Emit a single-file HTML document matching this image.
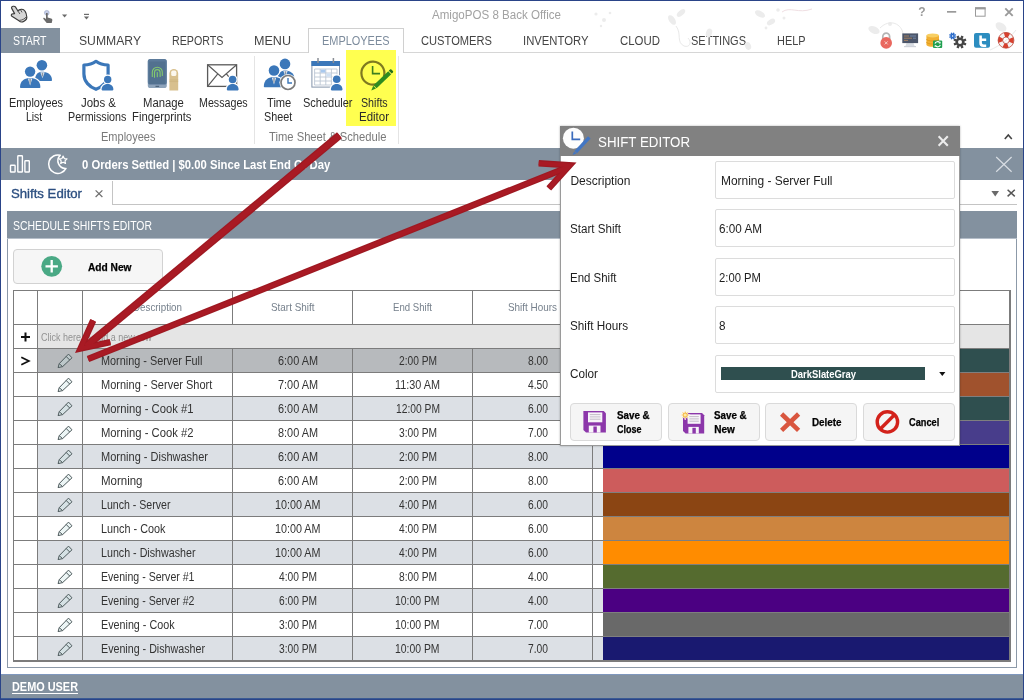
<!DOCTYPE html>
<html><head><meta charset="utf-8"><title>AmigoPOS 8 Back Office</title>
<style>
html,body{margin:0;padding:0;}
body{width:1024px;height:700px;position:relative;overflow:hidden;background:#fff;font-family:"Liberation Sans",sans-serif;}
.t{position:absolute;white-space:nowrap;line-height:1.2;transform-origin:0 50%;}
.r{position:absolute;box-sizing:border-box;}
svg{position:absolute;left:0;top:0;overflow:visible;}
</style></head><body><div id="app" style="position:absolute;left:0;top:0;width:1024px;height:700px;will-change:transform;">
<div class="r" style="left:0px;top:0px;width:1024px;height:700px;background:#fff;border-left:1px solid #2a4488;border-right:1px solid #2a4488;border-top:1px solid #2a4488;border-bottom:1px solid #2a4488;"></div>
<div class="t" style="left:431.50px;top:8.00px;font-size:12.5px;color:#a2a2a2;transform:scaleX(0.9253);">AmigoPOS 8 Back Office</div>
<div class="t" style="left:918.20px;top:5.00px;font-size:12px;color:#9a9a9a;font-weight:bold;">?</div>
<div class="r" style="left:1px;top:28px;width:59px;height:25px;background:#83919f;"></div>
<div class="r" style="left:60px;top:52px;width:962px;height:1px;background:#d6d6d6;"></div>
<div class="r" style="left:308px;top:28px;width:96px;height:25px;background:#fff;border:1px solid #d0d0d0;border-bottom:none;"></div>
<div class="t" style="left:13.00px;top:34.00px;font-size:12.5px;color:#fff;transform:scaleX(0.8413);">START</div>
<div class="t" style="left:79.00px;top:34.00px;font-size:12.5px;color:#444;transform:scaleX(0.9739);">SUMMARY</div>
<div class="t" style="left:172.00px;top:34.00px;font-size:12.5px;color:#444;transform:scaleX(0.8555);">REPORTS</div>
<div class="t" style="left:254.00px;top:34.00px;font-size:12.5px;color:#444;transform:scaleX(1.0053);">MENU</div>
<div class="t" style="left:322.00px;top:34.00px;font-size:12.5px;color:#7c8b9c;transform:scaleX(0.8753);">EMPLOYEES</div>
<div class="t" style="left:420.50px;top:34.00px;font-size:12.5px;color:#444;transform:scaleX(0.8915);">CUSTOMERS</div>
<div class="t" style="left:523.00px;top:34.00px;font-size:12.5px;color:#444;transform:scaleX(0.9038);">INVENTORY</div>
<div class="t" style="left:619.50px;top:34.00px;font-size:12.5px;color:#444;transform:scaleX(0.9142);">CLOUD</div>
<div class="t" style="left:690.50px;top:34.00px;font-size:12.5px;color:#444;transform:scaleX(0.8799);">SETTINGS</div>
<div class="t" style="left:777.00px;top:34.00px;font-size:12.5px;color:#444;transform:scaleX(0.8728);">HELP</div>
<div class="r" style="left:346px;top:50px;width:50px;height:76px;background:#ffff50;"></div>
<div class="r" style="left:254px;top:56px;width:1px;height:88px;background:#e4e4e4;"></div>
<div class="r" style="left:398px;top:56px;width:1px;height:88px;background:#e4e4e4;"></div>
<div class="t" style="left:9.00px;top:96.00px;font-size:12px;color:#2b2b2b;transform:scaleX(0.9097);">Employees</div>
<div class="t" style="left:26.30px;top:110.00px;font-size:12px;color:#2b2b2b;transform:scaleX(0.8675);">List</div>
<div class="t" style="left:80.50px;top:96.00px;font-size:12px;color:#2b2b2b;transform:scaleX(0.9540);">Jobs &amp;</div>
<div class="t" style="left:67.50px;top:110.00px;font-size:12px;color:#2b2b2b;transform:scaleX(0.8921);">Permissions</div>
<div class="t" style="left:143.00px;top:96.00px;font-size:12px;color:#2b2b2b;transform:scaleX(0.9409);">Manage</div>
<div class="t" style="left:132.00px;top:110.00px;font-size:12px;color:#2b2b2b;transform:scaleX(0.9391);">Fingerprints</div>
<div class="t" style="left:198.80px;top:96.00px;font-size:12px;color:#2b2b2b;transform:scaleX(0.8905);">Messages</div>
<div class="t" style="left:267.00px;top:96.00px;font-size:12px;color:#2b2b2b;transform:scaleX(0.9268);">Time</div>
<div class="t" style="left:263.80px;top:110.00px;font-size:12px;color:#2b2b2b;transform:scaleX(0.8993);">Sheet</div>
<div class="t" style="left:302.50px;top:96.00px;font-size:12px;color:#2b2b2b;transform:scaleX(0.9161);">Scheduler</div>
<div class="t" style="left:361.30px;top:96.00px;font-size:12px;color:#2b2b2b;transform:scaleX(0.8896);">Shifts</div>
<div class="t" style="left:358.80px;top:110.00px;font-size:12px;color:#2b2b2b;transform:scaleX(0.9570);">Editor</div>
<div class="t" style="left:101.00px;top:130.00px;font-size:12px;color:#7a7a7a;transform:scaleX(0.9181);">Employees</div>
<div class="t" style="left:268.80px;top:130.00px;font-size:12px;color:#7a7a7a;transform:scaleX(0.9353);">Time Sheet &amp; Schedule</div>
<div class="r" style="left:1px;top:148px;width:1022px;height:32px;background:#83919f;"></div>
<div class="t" style="left:82.40px;top:158.00px;font-size:12.5px;color:#fff;transform:scaleX(0.9025);font-weight:bold;">0 Orders Settled | $0.00 Since Last End Of Day</div>
<div class="r" style="left:112px;top:204px;width:905px;height:1px;background:#c4c4c4;"></div>
<div class="r" style="left:112px;top:181px;width:1px;height:24px;background:#c4c4c4;"></div>
<div class="t" style="left:11.30px;top:186.00px;font-size:13px;color:#2c4f80;transform:scaleX(1.0131);-webkit-text-stroke:.35px #2c4f80;">Shifts Editor</div>
<div class="r" style="left:7px;top:212px;width:1010px;height:456px;background:#fff;border:1px solid #8c99a8;border-top:none;"></div>
<div class="r" style="left:7px;top:211px;width:1010px;height:27px;background:#83919f;"></div>
<div class="r" style="left:7px;top:238px;width:1010px;height:1px;background:#b5bec9;"></div>
<div class="t" style="left:13.00px;top:219.00px;font-size:12.5px;color:#fff;transform:scaleX(0.8350);">SCHEDULE SHIFTS EDITOR</div>
<div class="r" style="left:13px;top:249px;width:150px;height:35px;background:#f6f6f6;border:1px solid #d2d2d2;border-radius:4px;"></div>
<div class="t" style="left:88.20px;top:262.00px;font-size:10px;color:#000;transform:scaleX(1.0169);font-weight:bold;-webkit-text-stroke:.25px #000;">Add New</div>
<div class="r" style="left:13px;top:290px;width:998px;height:372px;background:#fff;border:1px solid #7c7c7c;border-bottom-width:2px;border-right-width:2px;"></div>
<div class="r" style="left:38px;top:325px;width:971px;height:23px;background:#e5e5e5;"></div>
<div class="r" style="left:38px;top:348px;width:555px;height:24px;background:#b7babd;"></div>
<div class="r" style="left:593px;top:348px;width:10px;height:24px;background:#b7babd;"></div>
<div class="r" style="left:603px;top:348px;width:406px;height:24px;background:#2F4F4F;"></div>
<div class="r" style="left:38px;top:372px;width:555px;height:24px;background:#fff;"></div>
<div class="r" style="left:603px;top:372px;width:406px;height:24px;background:#A0522D;"></div>
<div class="r" style="left:38px;top:396px;width:555px;height:24px;background:#dce0e5;"></div>
<div class="r" style="left:593px;top:396px;width:10px;height:24px;background:#dce0e5;"></div>
<div class="r" style="left:603px;top:396px;width:406px;height:24px;background:#2F4F4F;"></div>
<div class="r" style="left:38px;top:420px;width:555px;height:24px;background:#fff;"></div>
<div class="r" style="left:603px;top:420px;width:406px;height:24px;background:#483D8B;"></div>
<div class="r" style="left:38px;top:444px;width:555px;height:24px;background:#dce0e5;"></div>
<div class="r" style="left:593px;top:444px;width:10px;height:24px;background:#dce0e5;"></div>
<div class="r" style="left:603px;top:444px;width:406px;height:24px;background:#00008B;"></div>
<div class="r" style="left:38px;top:468px;width:555px;height:24px;background:#fff;"></div>
<div class="r" style="left:603px;top:468px;width:406px;height:24px;background:#CD5C5C;"></div>
<div class="r" style="left:38px;top:492px;width:555px;height:24px;background:#dce0e5;"></div>
<div class="r" style="left:593px;top:492px;width:10px;height:24px;background:#dce0e5;"></div>
<div class="r" style="left:603px;top:492px;width:406px;height:24px;background:#8B4513;"></div>
<div class="r" style="left:38px;top:516px;width:555px;height:24px;background:#fff;"></div>
<div class="r" style="left:603px;top:516px;width:406px;height:24px;background:#CD853F;"></div>
<div class="r" style="left:38px;top:540px;width:555px;height:24px;background:#dce0e5;"></div>
<div class="r" style="left:593px;top:540px;width:10px;height:24px;background:#dce0e5;"></div>
<div class="r" style="left:603px;top:540px;width:406px;height:24px;background:#FF8C00;"></div>
<div class="r" style="left:38px;top:564px;width:555px;height:24px;background:#fff;"></div>
<div class="r" style="left:603px;top:564px;width:406px;height:24px;background:#556B2F;"></div>
<div class="r" style="left:38px;top:588px;width:555px;height:24px;background:#dce0e5;"></div>
<div class="r" style="left:593px;top:588px;width:10px;height:24px;background:#dce0e5;"></div>
<div class="r" style="left:603px;top:588px;width:406px;height:24px;background:#4B0082;"></div>
<div class="r" style="left:38px;top:612px;width:555px;height:24px;background:#fff;"></div>
<div class="r" style="left:603px;top:612px;width:406px;height:24px;background:#696969;"></div>
<div class="r" style="left:38px;top:636px;width:555px;height:24px;background:#dce0e5;"></div>
<div class="r" style="left:593px;top:636px;width:10px;height:24px;background:#dce0e5;"></div>
<div class="r" style="left:603px;top:636px;width:406px;height:24px;background:#191970;"></div>
<div class="r" style="left:37px;top:290px;width:1px;height:371px;background:#7c7c7c;"></div>
<div class="r" style="left:82px;top:290px;width:1px;height:371px;background:#7c7c7c;"></div>
<div class="r" style="left:232px;top:290px;width:1px;height:35px;background:#7c7c7c;"></div>
<div class="r" style="left:232px;top:348px;width:1px;height:313px;background:#7c7c7c;"></div>
<div class="r" style="left:352px;top:290px;width:1px;height:35px;background:#7c7c7c;"></div>
<div class="r" style="left:352px;top:348px;width:1px;height:313px;background:#7c7c7c;"></div>
<div class="r" style="left:472px;top:290px;width:1px;height:35px;background:#7c7c7c;"></div>
<div class="r" style="left:472px;top:348px;width:1px;height:313px;background:#7c7c7c;"></div>
<div class="r" style="left:592px;top:290px;width:1px;height:35px;background:#7c7c7c;"></div>
<div class="r" style="left:592px;top:348px;width:1px;height:313px;background:#7c7c7c;"></div>
<div class="r" style="left:13px;top:324px;width:996px;height:1px;background:#7c7c7c;"></div>
<div class="r" style="left:13px;top:348px;width:996px;height:1px;background:#7c7c7c;"></div>
<div class="r" style="left:13px;top:372px;width:996px;height:1px;background:#7c7c7c;"></div>
<div class="r" style="left:13px;top:396px;width:996px;height:1px;background:#7c7c7c;"></div>
<div class="r" style="left:13px;top:420px;width:996px;height:1px;background:#7c7c7c;"></div>
<div class="r" style="left:13px;top:444px;width:996px;height:1px;background:#7c7c7c;"></div>
<div class="r" style="left:13px;top:468px;width:996px;height:1px;background:#7c7c7c;"></div>
<div class="r" style="left:13px;top:492px;width:996px;height:1px;background:#7c7c7c;"></div>
<div class="r" style="left:13px;top:516px;width:996px;height:1px;background:#7c7c7c;"></div>
<div class="r" style="left:13px;top:540px;width:996px;height:1px;background:#7c7c7c;"></div>
<div class="r" style="left:13px;top:564px;width:996px;height:1px;background:#7c7c7c;"></div>
<div class="r" style="left:13px;top:588px;width:996px;height:1px;background:#7c7c7c;"></div>
<div class="r" style="left:13px;top:612px;width:996px;height:1px;background:#7c7c7c;"></div>
<div class="r" style="left:13px;top:636px;width:996px;height:1px;background:#7c7c7c;"></div>
<div class="r" style="left:603px;top:348px;width:406px;height:1px;background:rgba(128,128,128,.75);"></div>
<div class="r" style="left:603px;top:372px;width:406px;height:1px;background:rgba(128,128,128,.75);"></div>
<div class="r" style="left:603px;top:396px;width:406px;height:1px;background:rgba(128,128,128,.75);"></div>
<div class="r" style="left:603px;top:420px;width:406px;height:1px;background:rgba(128,128,128,.75);"></div>
<div class="r" style="left:603px;top:444px;width:406px;height:1px;background:rgba(128,128,128,.75);"></div>
<div class="r" style="left:603px;top:468px;width:406px;height:1px;background:rgba(128,128,128,.75);"></div>
<div class="r" style="left:603px;top:492px;width:406px;height:1px;background:rgba(128,128,128,.75);"></div>
<div class="r" style="left:603px;top:516px;width:406px;height:1px;background:rgba(128,128,128,.75);"></div>
<div class="r" style="left:603px;top:540px;width:406px;height:1px;background:rgba(128,128,128,.75);"></div>
<div class="r" style="left:603px;top:564px;width:406px;height:1px;background:rgba(128,128,128,.75);"></div>
<div class="r" style="left:603px;top:588px;width:406px;height:1px;background:rgba(128,128,128,.75);"></div>
<div class="r" style="left:603px;top:612px;width:406px;height:1px;background:rgba(128,128,128,.75);"></div>
<div class="r" style="left:603px;top:636px;width:406px;height:1px;background:rgba(128,128,128,.75);"></div>
<div class="t" style="left:133.00px;top:301.00px;font-size:10.5px;color:#76808c;transform:scaleX(0.9330);">Description</div>
<div class="t" style="left:270.75px;top:301.00px;font-size:10.5px;color:#76808c;transform:scaleX(0.9436);">Start Shift</div>
<div class="t" style="left:393.00px;top:301.00px;font-size:10.5px;color:#76808c;transform:scaleX(0.9153);">End Shift</div>
<div class="t" style="left:508.00px;top:301.00px;font-size:10.5px;color:#76808c;transform:scaleX(0.9435);">Shift Hours</div>
<div class="t" style="left:40.80px;top:332.00px;font-size:10px;color:#929292;transform:scaleX(0.8972);">Click here to add a new row</div>
<div class="t" style="left:101.30px;top:354.00px;font-size:12px;color:#333;transform:scaleX(0.9051);">Morning - Server Full</div>
<div class="t" style="left:277.50px;top:354.00px;font-size:12px;color:#333;transform:scaleX(0.9085);">6:00 AM</div>
<div class="t" style="left:398.50px;top:354.00px;font-size:12px;color:#333;transform:scaleX(0.8503);">2:00 PM</div>
<div class="t" style="left:527.50px;top:354.00px;font-size:12px;color:#333;transform:scaleX(0.8564);">8.00</div>
<div class="t" style="left:101.30px;top:378.00px;font-size:12px;color:#333;transform:scaleX(0.9169);">Morning - Server Short</div>
<div class="t" style="left:277.50px;top:378.00px;font-size:12px;color:#333;transform:scaleX(0.9085);">7:00 AM</div>
<div class="t" style="left:395.00px;top:378.00px;font-size:12px;color:#333;transform:scaleX(0.9034);">11:30 AM</div>
<div class="t" style="left:527.50px;top:378.00px;font-size:12px;color:#333;transform:scaleX(0.8564);">4.50</div>
<div class="t" style="left:101.30px;top:402.00px;font-size:12px;color:#333;transform:scaleX(0.9371);">Morning - Cook #1</div>
<div class="t" style="left:277.50px;top:402.00px;font-size:12px;color:#333;transform:scaleX(0.9085);">6:00 AM</div>
<div class="t" style="left:395.50px;top:402.00px;font-size:12px;color:#333;transform:scaleX(0.8566);">12:00 PM</div>
<div class="t" style="left:527.50px;top:402.00px;font-size:12px;color:#333;transform:scaleX(0.8564);">6.00</div>
<div class="t" style="left:101.30px;top:426.00px;font-size:12px;color:#333;transform:scaleX(0.9371);">Morning - Cook #2</div>
<div class="t" style="left:277.50px;top:426.00px;font-size:12px;color:#333;transform:scaleX(0.9085);">8:00 AM</div>
<div class="t" style="left:398.50px;top:426.00px;font-size:12px;color:#333;transform:scaleX(0.8503);">3:00 PM</div>
<div class="t" style="left:527.50px;top:426.00px;font-size:12px;color:#333;transform:scaleX(0.8564);">7.00</div>
<div class="t" style="left:101.30px;top:450.00px;font-size:12px;color:#333;transform:scaleX(0.9168);">Morning - Dishwasher</div>
<div class="t" style="left:277.50px;top:450.00px;font-size:12px;color:#333;transform:scaleX(0.9085);">6:00 AM</div>
<div class="t" style="left:398.50px;top:450.00px;font-size:12px;color:#333;transform:scaleX(0.8503);">2:00 PM</div>
<div class="t" style="left:527.50px;top:450.00px;font-size:12px;color:#333;transform:scaleX(0.8564);">8.00</div>
<div class="t" style="left:101.30px;top:474.00px;font-size:12px;color:#333;transform:scaleX(0.9573);">Morning</div>
<div class="t" style="left:277.50px;top:474.00px;font-size:12px;color:#333;transform:scaleX(0.9085);">6:00 AM</div>
<div class="t" style="left:398.50px;top:474.00px;font-size:12px;color:#333;transform:scaleX(0.8503);">2:00 PM</div>
<div class="t" style="left:527.50px;top:474.00px;font-size:12px;color:#333;transform:scaleX(0.8564);">8.00</div>
<div class="t" style="left:101.30px;top:498.00px;font-size:12px;color:#333;transform:scaleX(0.8830);">Lunch - Server</div>
<div class="t" style="left:274.75px;top:498.00px;font-size:12px;color:#333;transform:scaleX(0.8974);">10:00 AM</div>
<div class="t" style="left:398.50px;top:498.00px;font-size:12px;color:#333;transform:scaleX(0.8503);">4:00 PM</div>
<div class="t" style="left:527.50px;top:498.00px;font-size:12px;color:#333;transform:scaleX(0.8564);">6.00</div>
<div class="t" style="left:101.30px;top:522.00px;font-size:12px;color:#333;transform:scaleX(0.9037);">Lunch - Cook</div>
<div class="t" style="left:274.75px;top:522.00px;font-size:12px;color:#333;transform:scaleX(0.8974);">10:00 AM</div>
<div class="t" style="left:398.50px;top:522.00px;font-size:12px;color:#333;transform:scaleX(0.8503);">4:00 PM</div>
<div class="t" style="left:527.50px;top:522.00px;font-size:12px;color:#333;transform:scaleX(0.8564);">6.00</div>
<div class="t" style="left:101.30px;top:546.00px;font-size:12px;color:#333;transform:scaleX(0.8911);">Lunch - Dishwasher</div>
<div class="t" style="left:274.75px;top:546.00px;font-size:12px;color:#333;transform:scaleX(0.8974);">10:00 AM</div>
<div class="t" style="left:398.50px;top:546.00px;font-size:12px;color:#333;transform:scaleX(0.8503);">4:00 PM</div>
<div class="t" style="left:527.50px;top:546.00px;font-size:12px;color:#333;transform:scaleX(0.8564);">6.00</div>
<div class="t" style="left:101.30px;top:570.00px;font-size:12px;color:#333;transform:scaleX(0.8816);">Evening - Server #1</div>
<div class="t" style="left:278.50px;top:570.00px;font-size:12px;color:#333;transform:scaleX(0.8503);">4:00 PM</div>
<div class="t" style="left:398.50px;top:570.00px;font-size:12px;color:#333;transform:scaleX(0.8503);">8:00 PM</div>
<div class="t" style="left:527.50px;top:570.00px;font-size:12px;color:#333;transform:scaleX(0.8564);">4.00</div>
<div class="t" style="left:101.30px;top:594.00px;font-size:12px;color:#333;transform:scaleX(0.8816);">Evening - Server #2</div>
<div class="t" style="left:278.50px;top:594.00px;font-size:12px;color:#333;transform:scaleX(0.8503);">6:00 PM</div>
<div class="t" style="left:395.25px;top:594.00px;font-size:12px;color:#333;transform:scaleX(0.8664);">10:00 PM</div>
<div class="t" style="left:527.50px;top:594.00px;font-size:12px;color:#333;transform:scaleX(0.8564);">4.00</div>
<div class="t" style="left:101.30px;top:618.00px;font-size:12px;color:#333;transform:scaleX(0.8959);">Evening - Cook</div>
<div class="t" style="left:278.50px;top:618.00px;font-size:12px;color:#333;transform:scaleX(0.8503);">3:00 PM</div>
<div class="t" style="left:395.25px;top:618.00px;font-size:12px;color:#333;transform:scaleX(0.8664);">10:00 PM</div>
<div class="t" style="left:527.50px;top:618.00px;font-size:12px;color:#333;transform:scaleX(0.8564);">7.00</div>
<div class="t" style="left:101.30px;top:642.00px;font-size:12px;color:#333;transform:scaleX(0.8910);">Evening - Dishwasher</div>
<div class="t" style="left:278.50px;top:642.00px;font-size:12px;color:#333;transform:scaleX(0.8503);">3:00 PM</div>
<div class="t" style="left:395.25px;top:642.00px;font-size:12px;color:#333;transform:scaleX(0.8664);">10:00 PM</div>
<div class="t" style="left:527.50px;top:642.00px;font-size:12px;color:#333;transform:scaleX(0.8564);">7.00</div>
<div class="r" style="left:1px;top:674px;width:1022px;height:25px;background:#83919f;border-top:1px solid #7f97bd;border-bottom:1px solid #3a5a94;"></div>
<div class="t" style="left:11.70px;top:680.00px;font-size:12px;color:#fff;transform:scaleX(0.9081);font-weight:bold;">DEMO USER</div>
<div class="r" style="left:11.7px;top:692.6px;width:66px;height:1.3px;background:#fff;"></div>
<svg width="1024" height="700" viewBox="0 0 1024 700"><path d="M13.3 6.3 C12.1 6.2 11.2 7.3 11.7 8.4 L14.6 13.6 L12.4 13.9 C11.2 14 10.9 15.6 11.9 16.2 L19 20.8 C20.5 22.3 22.5 22.2 24 21.2 C25.8 20.2 27 18.8 26.8 17 C26.6 14.8 26 12.6 25 11.2 C24 9.6 22.2 9 20.8 9.4 C19.6 9.6 18.6 10.2 17.8 10.8 L15.4 6.9 C14.9 6.3 14 6.2 13.3 6.3 Z" fill="#d6d6d6" stroke="#3a3a3a" stroke-width="1.15" stroke-linejoin="round"/><path d="M17.8 10.8 L19.9 14 M20.7 10 L22 12.4 M19.4 20.3 C21.6 20.4 25 19 26.4 16.6" fill="none" stroke="#4a4a4a" stroke-width=".9"/>
<circle cx="46.8" cy="12.8" r="2.4" fill="#c5cde6" stroke="#9aa6c8" stroke-width=".6"/>
<path d="M46 13 h1.7 v4.6 l3.4 .8 c1 .3 1.4 1 1.2 2 l-.6 2.6 h-5 l-3.3-4 c-.5-.8 .3-1.6 1.1-1.1 l1.5 1 z" fill="#6b6b6b"/>
<path d="M62 14.6 h5.2 l-2.6 3 z" fill="#6b6b6b"/>
<path d="M84 14.4 h5" stroke="#6b6b6b" stroke-width="1.2"/><path d="M83.9 16.5 h5.2 l-2.6 3 z" fill="#6b6b6b"/>
<rect x="947" y="11" width="9.2" height="1.7" fill="#9a9a9a"/>
<rect x="975.5" y="8" width="9.6" height="8.2" fill="none" stroke="#9a9a9a" stroke-width="1"/><rect x="975" y="7.2" width="10.6" height="2.2" fill="#9a9a9a"/>
<path d="M1005.3 8.4 L1012.7 15.8 M1012.7 8.4 L1005.3 15.8" stroke="#9a9a9a" stroke-width="1.9"/>
<g fill="#ececec" stroke="none"><circle cx="596" cy="14" r="1.6"/><circle cx="604" cy="20" r="2"/><circle cx="610" cy="13" r="1.3"/><circle cx="601" cy="26" r="1.2"/><ellipse cx="672" cy="20" rx="5.5" ry="3" transform="rotate(55 672 20)"/><ellipse cx="681" cy="13" rx="5" ry="2.6" transform="rotate(-40 681 13)"/><ellipse cx="709" cy="33" rx="3" ry="4.5" transform="rotate(20 709 33)"/><ellipse cx="748" cy="46" rx="3" ry="4" transform="rotate(-20 748 46)"/><ellipse cx="760" cy="14" rx="5.5" ry="3" transform="rotate(30 760 14)"/><ellipse cx="771" cy="22" rx="4.5" ry="2.6" transform="rotate(-30 771 22)"/><circle cx="778" cy="10" r="1.8"/><circle cx="784" cy="18" r="1.5"/><circle cx="766" cy="28" r="1.4"/><ellipse cx="874" cy="30" rx="6" ry="3.5" transform="rotate(25 874 30)"/><circle cx="890" cy="24" r="2"/><ellipse cx="1001" cy="27" rx="6" ry="4" transform="rotate(35 1001 27)"/></g>
<g fill="none" stroke="#e9e9e9" stroke-width="1"><path d="M676 26 C682 34 676 42 684 46 C690 48 692 42 688 38"/><path d="M782 12 C790 6 798 14 812 9" stroke="#f0dfe3"/><path d="M880 28 C890 18 902 24 903 34"/><path d="M990 50 C1000 46 1010 38 1016 30"/></g>
<path d="M882.8 39.5 v-3 a3.4 3.4 0 0 1 6.8 0 v3" fill="none" stroke="#b4b4b4" stroke-width="1.7"/><circle cx="886.2" cy="42.9" r="5.8" fill="#e9685f"/><path d="M884.7 41.4 l3 3 m0 -3 l-3 3" stroke="#f8cfc9" stroke-width="1"/>
<path d="M906.5 43 h7 l1.2 3.4 h-9.4 z" fill="#d9dde3"/><rect x="904" y="46" width="12" height="1.2" fill="#cfd3da"/><rect x="902.3" y="33.4" width="15.8" height="9.7" fill="#4c566a"/><path d="M904 36 h5 M904 38.2 h8 M904 40.4 h4" stroke="#b98a5e" stroke-width=".8"/><path d="M910 36 h6 M913 38.2 h3" stroke="#7f95b8" stroke-width=".8"/>
<path d="M926.4 35.4 v9.4 a6.3 2 0 0 0 12.6 0 v-9.4 z" fill="#f1b033"/><ellipse cx="932.7" cy="35.4" rx="6.3" ry="2" fill="#f8cf63"/><path d="M926.4 39 a6.3 2 0 0 0 12.6 0 M926.4 42 a6.3 2 0 0 0 12.6 0" fill="none" stroke="#dc9618" stroke-width=".8"/><rect x="933" y="40.5" width="9.2" height="7.6" rx="1" fill="#1f9f4f"/><path d="M935 43.6 a2.7 2.4 0 0 1 4.8 -1 M940.3 44.8 a2.7 2.4 0 0 1 -4.8 1.1" fill="none" stroke="#fff" stroke-width="1.1"/><path d="M940.6 41.4 v2 h-2 z M934.7 47.2 v-2 h2 z" fill="#fff"/>
<circle cx="960" cy="42" r="3.3" fill="none" stroke="#454545" stroke-width="2.6"/><path d="M963.97 43.65 L966.01 44.49 M961.65 45.97 L962.49 48.01 M958.35 45.97 L957.51 48.01 M956.03 43.65 L953.99 44.49 M956.03 40.35 L953.99 39.51 M958.35 38.03 L957.51 35.99 M961.65 38.03 L962.49 35.99 M963.97 40.35 L966.01 39.51 " stroke="#454545" stroke-width="2.4"/>
<circle cx="952.6" cy="36" r="1.5" fill="none" stroke="#2b6bc9" stroke-width="1.5"/><path d="M954.40 36.75 L955.79 37.32 M953.35 37.80 L953.92 39.19 M951.85 37.80 L951.28 39.19 M950.80 36.75 L949.41 37.32 M950.80 35.25 L949.41 34.68 M951.85 34.20 L951.28 32.81 M953.35 34.20 L953.92 32.81 M954.40 35.25 L955.79 34.68 " stroke="#2b6bc9" stroke-width="1.5"/>
<rect x="974" y="33" width="16" height="14.8" rx="2" fill="#2c8dc0"/><path d="M979.3 35.6 h2.6 v2.8 h4.3 v2.6 h-4.3 v1.6 c0 1.3 .7 1.8 1.9 1.8 h2.4 v2.6 h-2.9 c-2.8 0 -4 -1.4 -4 -4 z" fill="#fff"/>
<circle cx="1006" cy="40.3" r="5.6" fill="none" stroke="#f3f3f3" stroke-width="4.4"/><circle cx="1006" cy="40.3" r="5.6" fill="none" stroke="#d8412f" stroke-width="4.4" stroke-dasharray="4.398 4.398" transform="rotate(-22.5 1006 40.3)"/><circle cx="1006" cy="40.3" r="7.9" fill="none" stroke="#b5382a" stroke-width=".7"/><circle cx="1006" cy="40.3" r="3.3" fill="none" stroke="#b5382a" stroke-width=".7"/>
<path d="M1004.8 139 L1008.3 135 L1011.8 139" fill="none" stroke="#444" stroke-width="1.6"/>
<circle cx="41.9" cy="65.2" r="5.3" fill="#3b77b9"/><path d="M35 80.2 C35 73.82 38.80 71.8 41.9 71.8 C46.45 71.8 52 73.82 52 80.2 Q52 81 51.2 81 L35.8 81 Q35 81 35 80.2 Z" fill="#3b77b9"/><path d="M40.3 72.2 L44.7 72.2 L42.5 78.2 Z" fill="#e8eef5"/><path d="M41.7 72.7 L43.3 72.7 L43.1 75.7 L42.5 77.0 L41.9 75.7 Z" fill="#8a96a3"/>
<circle cx="30.1" cy="71.6" r="5.2" fill="#fff" stroke="#fff" stroke-width="2.4"/><path d="M20 87.2 C20 80.20 25.55 78 30.1 78 C34.73 78 40.4 80.20 40.4 87.2 Q40.4 88 39.6 88 L20.8 88 Q20 88 20 87.2 Z" fill="#fff" stroke="#fff" stroke-width="2.4"/><circle cx="30.1" cy="71.6" r="5.2" fill="#3b77b9"/><path d="M20 87.2 C20 80.20 25.55 78 30.1 78 C34.73 78 40.4 80.20 40.4 87.2 Q40.4 88 39.6 88 L20.8 88 Q20 88 20 87.2 Z" fill="#3b77b9"/><path d="M27.900000000000002 78.4 L32.300000000000004 78.4 L30.1 85.4 Z" fill="#e8eef5"/><path d="M29.3 78.9 L30.900000000000002 78.9 L30.700000000000003 82.9 L30.1 84.2 L29.5 82.9 Z" fill="#8a96a3"/>
<path d="M96 61.3 C92.5 64 88 65 83.9 65 L83.9 74 C83.9 81.5 89.5 87 96 89.3 C102.5 87 108.1 81.5 108.1 74 L108.1 65 C104 65 99.5 64 96 61.3 Z" fill="none" stroke="#3b77b9" stroke-width="3.2" stroke-linejoin="round"/>
<circle cx="107.7" cy="79.5" r="3.7" fill="#fff" stroke="#fff" stroke-width="2.4"/><path d="M101.6 89.60000000000001 C101.6 85.41 104.95 84 107.7 84 C110.27 84 113.4 85.41 113.4 89.60000000000001 Q113.4 90.4 112.60000000000001 90.4 L102.39999999999999 90.4 Q101.6 90.4 101.6 89.60000000000001 Z" fill="#fff" stroke="#fff" stroke-width="2.4"/><circle cx="107.7" cy="79.5" r="3.7" fill="#3b77b9"/><path d="M101.6 89.60000000000001 C101.6 85.41 104.95 84 107.7 84 C110.27 84 113.4 85.41 113.4 89.60000000000001 Q113.4 90.4 112.60000000000001 90.4 L102.39999999999999 90.4 Q101.6 90.4 101.6 89.60000000000001 Z" fill="#3b77b9"/>
<rect x="147.8" y="59.1" width="19" height="29" rx="2.6" fill="#8da3ba"/><rect x="147.8" y="59.1" width="19" height="25.5" rx="2.6" fill="#5c7b9b"/><rect x="149.2" y="61.5" width="16.2" height="22.6" fill="#52718f"/><rect x="155.5" y="85.8" width="3.6" height="1" fill="#3f556d"/>
<g fill="none" stroke="#84c96e" stroke-width="1.1" stroke-linecap="round"><path d="M152.3 76.5 V72.2 a5 5 0 0 1 10 0 V75.5"/><path d="M154.5 77.2 V72.4 a2.8 2.8 0 0 1 5.6 0 V76.4"/><path d="M157.3 72.6 V76.8"/></g>
<path d="M169.4 90.6 V73.4 a4.4 4.4 0 0 1 8.8 0 V90.6 Z" fill="#d8c08e"/><rect x="171.2" y="70.6" width="5.2" height="5.4" rx="1.6" fill="#fbf7ee"/><path d="M169.4 80 h8.8 M169.4 81.6 h8.8" stroke="#c9ae78" stroke-width=".6"/>
<rect x="207.6" y="64.8" width="29" height="21.6" fill="#fff" stroke="#5a5a5a" stroke-width="1.3"/><path d="M207.6 64.8 L222 77.4 L236.6 64.8 M207.6 86.4 L217.8 73.8 M236.6 86.4 L226.4 73.8" fill="none" stroke="#5a5a5a" stroke-width="1.2"/>
<circle cx="232.6" cy="79.5" r="3.8" fill="#fff" stroke="#fff" stroke-width="2.4"/><path d="M226.8 89.60000000000001 C226.8 85.41 229.99 84 232.6 84 C235.30 84 238.6 85.41 238.6 89.60000000000001 Q238.6 90.4 237.79999999999998 90.4 L227.60000000000002 90.4 Q226.8 90.4 226.8 89.60000000000001 Z" fill="#fff" stroke="#fff" stroke-width="2.4"/><circle cx="232.6" cy="79.5" r="3.8" fill="#3b77b9"/><path d="M226.8 89.60000000000001 C226.8 85.41 229.99 84 232.6 84 C235.30 84 238.6 85.41 238.6 89.60000000000001 Q238.6 90.4 237.79999999999998 90.4 L227.60000000000002 90.4 Q226.8 90.4 226.8 89.60000000000001 Z" fill="#3b77b9"/>
<circle cx="285" cy="63.9" r="5.3" fill="#3b77b9"/><path d="M277.5 79.2 C277.5 72.51 281.62 70.4 285 70.4 C289.27 70.4 294.5 72.51 294.5 79.2 Q294.5 80 293.7 80 L278.3 80 Q277.5 80 277.5 79.2 Z" fill="#3b77b9"/><path d="M283.3 70.8 L287.7 70.8 L285.5 76.8 Z" fill="#e8eef5"/><path d="M284.7 71.3 L286.3 71.3 L286.1 74.3 L285.5 75.6 L284.9 74.3 Z" fill="#8a96a3"/>
<circle cx="274" cy="70.5" r="5.3" fill="#fff" stroke="#fff" stroke-width="2.4"/><path d="M263.8 86.4 C263.8 79.24 269.41 77 274 77 C278.59 77 284.2 79.24 284.2 86.4 Q284.2 87.2 283.4 87.2 L264.6 87.2 Q263.8 87.2 263.8 86.4 Z" fill="#fff" stroke="#fff" stroke-width="2.4"/><circle cx="274" cy="70.5" r="5.3" fill="#3b77b9"/><path d="M263.8 86.4 C263.8 79.24 269.41 77 274 77 C278.59 77 284.2 79.24 284.2 86.4 Q284.2 87.2 283.4 87.2 L264.6 87.2 Q263.8 87.2 263.8 86.4 Z" fill="#3b77b9"/><path d="M271.8 77.4 L276.2 77.4 L274 84.4 Z" fill="#e8eef5"/><path d="M273.2 77.9 L274.8 77.9 L274.6 81.9 L274 83.2 L273.4 81.9 Z" fill="#8a96a3"/>
<circle cx="288" cy="82.5" r="8.6" fill="#fff"/><circle cx="288" cy="82.5" r="7" fill="#fff" stroke="#7b7b7b" stroke-width="1.7"/><path d="M288 78 V83 H292" fill="none" stroke="#3b77b9" stroke-width="1.4"/>
<rect x="311.9" y="61.5" width="27.6" height="25.6" fill="#fff" stroke="#8494ab" stroke-width="1"/><rect x="311.4" y="61" width="28.6" height="5" fill="#3b77b9"/><path d="M318 58 v5 M333.4 58 v5" stroke="#8a8f96" stroke-width="1.5"/>
<g stroke="#bcc6d4" stroke-width=".9" fill="none"><path d="M314.6 69 H337"/><path d="M314.6 73 H337"/><path d="M314.6 77 H337"/><path d="M314.6 81 H337"/><path d="M314.6 85 H337"/><path d="M314.6 69 V85"/><path d="M320.2 69 V85"/><path d="M325.8 69 V85"/><path d="M331.4 69 V85"/><path d="M337.0 69 V85"/></g><rect x="320.7" y="69.5" width="4.7" height="3.1" fill="#a9c9ee"/><rect x="326.3" y="73.5" width="4.7" height="3.1" fill="#cfe0f3"/>
<circle cx="336.7" cy="79.3" r="3.8" fill="#fff" stroke="#fff" stroke-width="2.4"/><path d="M330.9 89.60000000000001 C330.9 85.41 334.09 84 336.7 84 C339.31 84 342.5 85.41 342.5 89.60000000000001 Q342.5 90.4 341.7 90.4 L331.7 90.4 Q330.9 90.4 330.9 89.60000000000001 Z" fill="#fff" stroke="#fff" stroke-width="2.4"/><circle cx="336.7" cy="79.3" r="3.8" fill="#3b77b9"/><path d="M330.9 89.60000000000001 C330.9 85.41 334.09 84 336.7 84 C339.31 84 342.5 85.41 342.5 89.60000000000001 Q342.5 90.4 341.7 90.4 L331.7 90.4 Q330.9 90.4 330.9 89.60000000000001 Z" fill="#3b77b9"/>
<path d="M383.9 76.5 A11.5 11.5 0 1 0 378.5 83.2" fill="none" stroke="#7f7a20" stroke-width="2.2"/><path d="M372.6 66 V73.6 H380" fill="none" stroke="#3d7f1f" stroke-width="1.6"/>
<path d="M388.2 71.2 L391.2 74.2 L376.6 88.2 L373.6 85.2 Z" fill="#2f8c20"/><path d="M373.2 85.8 L376 88.6 L371.3 90.5 Z" fill="#2f8c20"/><path d="M388.8 70.7 l1.2 -1.1 a1 1 0 0 1 1.4 0 l1.5 1.5 a1 1 0 0 1 0 1.4 l-1.2 1.1 z" fill="#256f19"/>
<g fill="none" stroke="#fff" stroke-width="1.4"><rect x="10.5" y="165.2" width="4.6" height="6.8" rx=".6"/><rect x="17.8" y="155.8" width="4.6" height="16.2" rx=".6"/><rect x="24.9" y="160.8" width="4.4" height="11.2" rx=".6"/></g>
<path d="M60.3 155.3 A9.2 9.2 0 1 0 66 168.4 A7.6 7.6 0 0 1 60.3 155.3 Z" fill="none" stroke="#fff" stroke-width="1.5" stroke-linejoin="round"/>
<polygon points="63.10,156.10 64.28,158.58 67.00,158.93 65.00,160.82 65.51,163.52 63.10,162.20 60.69,163.52 61.20,160.82 59.20,158.93 61.92,158.58" fill="none" stroke="#fff" stroke-width="1.2" stroke-linejoin="round"/>
<path d="M996.2 157 L1011.6 171.8 M1011.6 157 L996.2 171.8" stroke="#e6eaee" stroke-width="1.2" stroke-opacity=".85"/>
<path d="M95.6 190.4 L102.4 197 M102.4 190.4 L95.6 197" stroke="#707070" stroke-width="1.25"/>
<path d="M991.4 191 h7.6 l-3.8 5.4 z" fill="#6a6a6a"/><path d="M1007.6 189.8 L1014.8 196.4 M1014.8 189.8 L1007.6 196.4" stroke="#555" stroke-width="1.5"/>
<circle cx="51.7" cy="266.3" r="10.4" fill="#4aa985"/><path d="M45.5 266.3 h12.4 M51.7 260.1 v12.4" stroke="#fff" stroke-width="2.3"/>
<path d="M21 337 h9 M25.5 332.5 v9" stroke="#111" stroke-width="2"/>
<path d="M21.3 357.2 L28.9 361 L21.3 364.8" fill="none" stroke="#111" stroke-width="1.7"/>
<g transform="translate(0 348)" fill="rgba(200,225,225,.35)" stroke="#4d5a5c" stroke-width="1" stroke-linejoin="round"><path d="M58.1 19.6 L59.2 15.7 L68.5 6.1 L72 9.8 L62.6 18.6 Z"/><path d="M59.2 15.7 L62.6 18.6 M66.1 8.4 L69.7 12" fill="none"/></g>
<g transform="translate(0 372)" fill="rgba(200,225,225,.35)" stroke="#4d5a5c" stroke-width="1" stroke-linejoin="round"><path d="M58.1 19.6 L59.2 15.7 L68.5 6.1 L72 9.8 L62.6 18.6 Z"/><path d="M59.2 15.7 L62.6 18.6 M66.1 8.4 L69.7 12" fill="none"/></g>
<g transform="translate(0 396)" fill="rgba(200,225,225,.35)" stroke="#4d5a5c" stroke-width="1" stroke-linejoin="round"><path d="M58.1 19.6 L59.2 15.7 L68.5 6.1 L72 9.8 L62.6 18.6 Z"/><path d="M59.2 15.7 L62.6 18.6 M66.1 8.4 L69.7 12" fill="none"/></g>
<g transform="translate(0 420)" fill="rgba(200,225,225,.35)" stroke="#4d5a5c" stroke-width="1" stroke-linejoin="round"><path d="M58.1 19.6 L59.2 15.7 L68.5 6.1 L72 9.8 L62.6 18.6 Z"/><path d="M59.2 15.7 L62.6 18.6 M66.1 8.4 L69.7 12" fill="none"/></g>
<g transform="translate(0 444)" fill="rgba(200,225,225,.35)" stroke="#4d5a5c" stroke-width="1" stroke-linejoin="round"><path d="M58.1 19.6 L59.2 15.7 L68.5 6.1 L72 9.8 L62.6 18.6 Z"/><path d="M59.2 15.7 L62.6 18.6 M66.1 8.4 L69.7 12" fill="none"/></g>
<g transform="translate(0 468)" fill="rgba(200,225,225,.35)" stroke="#4d5a5c" stroke-width="1" stroke-linejoin="round"><path d="M58.1 19.6 L59.2 15.7 L68.5 6.1 L72 9.8 L62.6 18.6 Z"/><path d="M59.2 15.7 L62.6 18.6 M66.1 8.4 L69.7 12" fill="none"/></g>
<g transform="translate(0 492)" fill="rgba(200,225,225,.35)" stroke="#4d5a5c" stroke-width="1" stroke-linejoin="round"><path d="M58.1 19.6 L59.2 15.7 L68.5 6.1 L72 9.8 L62.6 18.6 Z"/><path d="M59.2 15.7 L62.6 18.6 M66.1 8.4 L69.7 12" fill="none"/></g>
<g transform="translate(0 516)" fill="rgba(200,225,225,.35)" stroke="#4d5a5c" stroke-width="1" stroke-linejoin="round"><path d="M58.1 19.6 L59.2 15.7 L68.5 6.1 L72 9.8 L62.6 18.6 Z"/><path d="M59.2 15.7 L62.6 18.6 M66.1 8.4 L69.7 12" fill="none"/></g>
<g transform="translate(0 540)" fill="rgba(200,225,225,.35)" stroke="#4d5a5c" stroke-width="1" stroke-linejoin="round"><path d="M58.1 19.6 L59.2 15.7 L68.5 6.1 L72 9.8 L62.6 18.6 Z"/><path d="M59.2 15.7 L62.6 18.6 M66.1 8.4 L69.7 12" fill="none"/></g>
<g transform="translate(0 564)" fill="rgba(200,225,225,.35)" stroke="#4d5a5c" stroke-width="1" stroke-linejoin="round"><path d="M58.1 19.6 L59.2 15.7 L68.5 6.1 L72 9.8 L62.6 18.6 Z"/><path d="M59.2 15.7 L62.6 18.6 M66.1 8.4 L69.7 12" fill="none"/></g>
<g transform="translate(0 588)" fill="rgba(200,225,225,.35)" stroke="#4d5a5c" stroke-width="1" stroke-linejoin="round"><path d="M58.1 19.6 L59.2 15.7 L68.5 6.1 L72 9.8 L62.6 18.6 Z"/><path d="M59.2 15.7 L62.6 18.6 M66.1 8.4 L69.7 12" fill="none"/></g>
<g transform="translate(0 612)" fill="rgba(200,225,225,.35)" stroke="#4d5a5c" stroke-width="1" stroke-linejoin="round"><path d="M58.1 19.6 L59.2 15.7 L68.5 6.1 L72 9.8 L62.6 18.6 Z"/><path d="M59.2 15.7 L62.6 18.6 M66.1 8.4 L69.7 12" fill="none"/></g>
<g transform="translate(0 636)" fill="rgba(200,225,225,.35)" stroke="#4d5a5c" stroke-width="1" stroke-linejoin="round"><path d="M58.1 19.6 L59.2 15.7 L68.5 6.1 L72 9.8 L62.6 18.6 Z"/><path d="M59.2 15.7 L62.6 18.6 M66.1 8.4 L69.7 12" fill="none"/></g></svg>
<div class="r" style="left:560px;top:126px;width:400px;height:320px;background:#fff;border:1px solid #9a9a9a;border-top:none;box-shadow:0 0 2px rgba(0,0,0,.3);"></div>
<div class="r" style="left:560px;top:126px;width:400px;height:30px;background:#818181;"></div>
<div class="t" style="left:598.20px;top:133.00px;font-size:15px;color:#fff;transform:scaleX(0.8878);">SHIFT EDITOR</div>
<div class="r" style="left:715px;top:161px;width:240px;height:38px;background:#fff;border:1px solid #dcdcdc;border-radius:2px;"></div>
<div class="t" style="left:570.40px;top:174.00px;font-size:12px;color:#1e1e1e;">Description</div>
<div class="t" style="left:721.40px;top:173.00px;font-size:13px;color:#1e1e1e;transform:scaleX(0.9187);">Morning - Server Full</div>
<div class="r" style="left:715px;top:209px;width:240px;height:38px;background:#fff;border:1px solid #dcdcdc;border-radius:2px;"></div>
<div class="t" style="left:570.40px;top:222.00px;font-size:12px;color:#1e1e1e;transform:scaleX(0.9679);">Start Shift</div>
<div class="t" style="left:719.00px;top:221.00px;font-size:13px;color:#1e1e1e;transform:scaleX(0.9015);">6:00 AM</div>
<div class="r" style="left:715px;top:258px;width:240px;height:38px;background:#fff;border:1px solid #dcdcdc;border-radius:2px;"></div>
<div class="t" style="left:570.40px;top:271.00px;font-size:12px;color:#1e1e1e;transform:scaleX(0.9549);">End Shift</div>
<div class="t" style="left:719.00px;top:270.00px;font-size:13px;color:#1e1e1e;transform:scaleX(0.8675);">2:00 PM</div>
<div class="r" style="left:715px;top:306px;width:240px;height:38px;background:#fff;border:1px solid #dcdcdc;border-radius:2px;"></div>
<div class="t" style="left:570.40px;top:319.00px;font-size:12px;color:#1e1e1e;transform:scaleX(0.9772);">Shift Hours</div>
<div class="t" style="left:719.00px;top:318.00px;font-size:13px;color:#1e1e1e;transform:scaleX(0.9000);">8</div>
<div class="r" style="left:715px;top:355px;width:240px;height:38px;background:#fff;border:1px solid #dcdcdc;border-radius:2px;"></div>
<div class="t" style="left:570.40px;top:367.00px;font-size:12px;color:#1e1e1e;transform:scaleX(0.9765);">Color</div>
<div class="r" style="left:721px;top:367px;width:204px;height:13px;background:#2F4F4F;"></div>
<div class="t" style="left:790.50px;top:369.00px;font-size:10px;color:#fff;transform:scaleX(0.9430);font-weight:bold;">DarkSlateGray</div>
<div class="r" style="left:570px;top:403px;width:92px;height:38px;background:#f5f5f5;border:1px solid #dadada;border-radius:4px;"></div>
<div class="t" style="left:616.60px;top:410.00px;font-size:10px;color:#000;transform:scaleX(0.9804);font-weight:bold;-webkit-text-stroke:.25px #000;">Save &amp;</div>
<div class="t" style="left:616.60px;top:424.00px;font-size:10px;color:#000;transform:scaleX(0.8961);font-weight:bold;-webkit-text-stroke:.25px #000;">Close</div>
<div class="r" style="left:668px;top:403px;width:92px;height:38px;background:#f5f5f5;border:1px solid #dadada;border-radius:4px;"></div>
<div class="t" style="left:714.20px;top:410.00px;font-size:10px;color:#000;transform:scaleX(0.9804);font-weight:bold;-webkit-text-stroke:.25px #000;">Save &amp;</div>
<div class="t" style="left:714.20px;top:424.00px;font-size:10px;color:#000;font-weight:bold;-webkit-text-stroke:.25px #000;">New</div>
<div class="r" style="left:765px;top:403px;width:92px;height:38px;background:#f5f5f5;border:1px solid #dadada;border-radius:4px;"></div>
<div class="t" style="left:811.60px;top:417.00px;font-size:10px;color:#000;transform:scaleX(0.9863);font-weight:bold;-webkit-text-stroke:.25px #000;">Delete</div>
<div class="r" style="left:863px;top:403px;width:92px;height:38px;background:#f5f5f5;border:1px solid #dadada;border-radius:4px;"></div>
<div class="t" style="left:909.00px;top:417.00px;font-size:10px;color:#000;transform:scaleX(0.9210);font-weight:bold;-webkit-text-stroke:.25px #000;">Cancel</div>
<svg width="1024" height="700" viewBox="0 0 1024 700"><circle cx="573.4" cy="138.2" r="10.5" fill="#fdfdfd"/><path d="M572.3 131.5 V139.4 H580.2" fill="none" stroke="#3b6bbd" stroke-width="1.7"/>
<path d="M588 136.3 L590.6 138.6 L577 153.2 L574.4 150.9 Z" fill="#4276c4"/><path d="M574.1 151.4 L576.5 153.6 L572.6 155 Z" fill="#4276c4"/>
<path d="M938.6 136.3 L947.8 145.7 M947.8 136.3 L938.6 145.7" stroke="#ececec" stroke-width="2.1"/>
<path d="M939.2 372 h6.2 l-3.1 4 z" fill="#111"/>
<path d="M583.4 411 h20.3 l2.2 2.2 v19.3 h-19.9 l-2.6 -2.6 z" fill="#8c37aa"/><rect x="588.0" y="412.4" width="14.3" height="9.9" fill="#f7f4f9"/><path d="M589.8 414.6 h10.7" stroke="#bdb6c2" stroke-width=".9"/><path d="M589.8 416.9 h10.7" stroke="#bdb6c2" stroke-width=".9"/><path d="M589.8 419.2 h10.7" stroke="#bdb6c2" stroke-width=".9"/><rect x="588.8" y="425.6" width="11.7" height="6.9" fill="#f7f4f9"/><rect x="593.4" y="426.5" width="3.4" height="6.0" fill="#8c37aa"/>
<path d="M683 413 h19.0 l2.2 2.2 v18.3 h-18.599999999999998 l-2.6 -2.6 z" fill="#8c37aa"/><rect x="687.6" y="414.4" width="13.0" height="9.4" fill="#f7f4f9"/><path d="M689.4 416.6 h9.399999999999999" stroke="#bdb6c2" stroke-width=".9"/><path d="M689.4 418.9 h9.399999999999999" stroke="#bdb6c2" stroke-width=".9"/><path d="M689.4 421.2 h9.399999999999999" stroke="#bdb6c2" stroke-width=".9"/><rect x="688.4" y="426.9" width="10.399999999999999" height="6.6" fill="#f7f4f9"/><rect x="692.4" y="427.8" width="3.4" height="5.7" fill="#8c37aa"/>
<polygon points="690.20,415.00 687.42,415.92 688.74,418.54 686.12,417.22 685.20,420.00 684.28,417.22 681.66,418.54 682.98,415.92 680.20,415.00 682.98,414.08 681.66,411.46 684.28,412.78 685.20,410.00 686.12,412.78 688.74,411.46 687.42,414.08" fill="#f6b73c" stroke="#fff" stroke-width=".6"/><circle cx="685.2" cy="415" r="1.6" fill="#fde9a8"/>
<path d="M781.6 414 L798.6 430.4 M798.6 414 L781.6 430.4" stroke="#d9563f" stroke-width="4.6"/>
<circle cx="887.4" cy="421.9" r="10.2" fill="none" stroke="#d3221b" stroke-width="3.4"/><path d="M880.3 429 L894.5 414.8" stroke="#d3221b" stroke-width="3.4"/></svg>
<svg width="1024" height="700" viewBox="0 0 1024 700"><g fill="none" stroke-linejoin="miter" stroke-miterlimit="10"><path d="M339.5 135.3 L86 346.3" stroke="#9e1922" stroke-width="7.8"/><path d="M93.2 320.3 L80.6 348.5 L110.35 342.1" stroke="#9e1922" stroke-width="6.5"/><path d="M88.05 359.05 L566 168" stroke="#9e1922" stroke-width="6.6"/><path d="M538.7 163.2 L569.7 165.34 L548.8 188.4" stroke="#9e1922" stroke-width="6.4"/><path d="M339.5 135.3 L86 346.3" stroke="#a91a24" stroke-width="5.4"/><path d="M93.2 320.3 L80.6 348.5 L110.35 342.1" stroke="#a91a24" stroke-width="4.1"/><path d="M88.05 359.05 L566 168" stroke="#a91a24" stroke-width="4.2"/><path d="M538.7 163.2 L569.7 165.34 L548.8 188.4" stroke="#a91a24" stroke-width="4.0"/></g></svg>
</div></body></html>
